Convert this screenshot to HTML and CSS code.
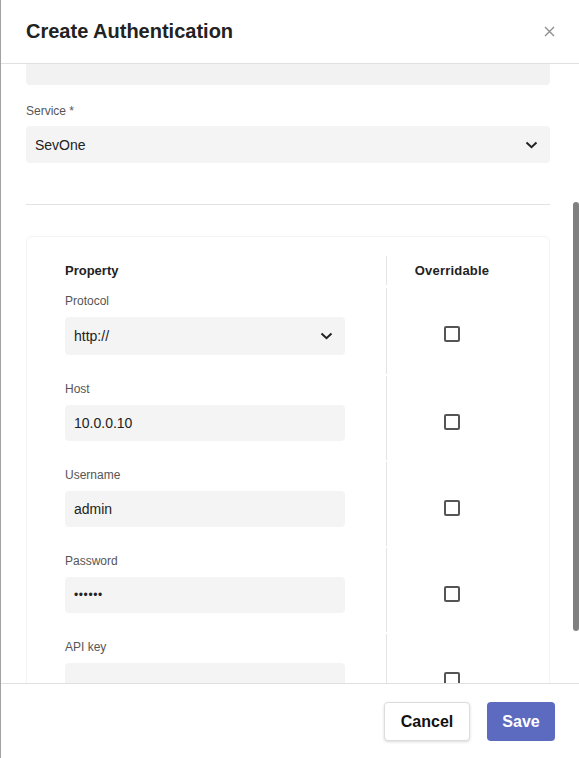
FILE: index.html
```html
<!DOCTYPE html>
<html lang="en">
<head>
<meta charset="utf-8">
<title>Create Authentication</title>
<link rel="stylesheet" href="styles.css">
</head>
<body>
<div class="dialog">
  <header class="dlg-header">
    <h1 class="dlg-title">Create Authentication</h1>
    <button class="close-btn" aria-label="Close">
      <svg width="11" height="11" viewBox="0 0 11 11"><path d="M1 1L10 10M10 1L1 10" stroke="#8c8c8c" stroke-width="1.3" fill="none"/></svg>
    </button>
  </header>
  <main class="dlg-body">
    <div class="cut-input"></div>
    <div class="field-label service-label">Service *</div>
    <div class="select wide">
      <span>SevOne</span>
      <svg class="chev" width="13" height="8" viewBox="0 0 13 8"><path d="M1.5 1.5L6.5 6.2L11.5 1.5" stroke="#222" stroke-width="2" fill="none"/></svg>
    </div>
    <hr class="divider">
    <section class="card">
      <div class="grid">
        <div class="cell-left head">Property</div>
        <div class="cell-right head">Overridable</div>

        <div class="cell-left row">
          <div class="field-label">Protocol</div>
          <div class="select tall">
            <span>http://</span>
            <svg class="chev" width="13" height="8" viewBox="0 0 13 8"><path d="M1.5 1.5L6.5 6.2L11.5 1.5" stroke="#222" stroke-width="2" fill="none"/></svg>
          </div>
        </div>
        <div class="cell-right row"><span class="checkbox"></span></div>

        <div class="cell-left row">
          <div class="field-label">Host</div>
          <div class="input">10.0.0.10</div>
        </div>
        <div class="cell-right row"><span class="checkbox"></span></div>

        <div class="cell-left row">
          <div class="field-label">Username</div>
          <div class="input">admin</div>
        </div>
        <div class="cell-right row"><span class="checkbox"></span></div>

        <div class="cell-left row">
          <div class="field-label">Password</div>
          <div class="input pw">••••••</div>
        </div>
        <div class="cell-right row"><span class="checkbox"></span></div>

        <div class="cell-left row">
          <div class="field-label">API key</div>
          <div class="input"></div>
        </div>
        <div class="cell-right row"><span class="checkbox"></span></div>
      </div>
    </section>
    <div class="scrollbar"></div>
  </main>
  <footer class="dlg-footer">
    <button class="btn btn-cancel">Cancel</button>
    <button class="btn btn-save">Save</button>
  </footer>
</div>
</body>
</html>
```

FILE: styles.css
```css
html, body {
  margin: 0;
  padding: 0;
  width: 579px;
  height: 758px;
  overflow: hidden;
  background: #ffffff;
  font-family: "Liberation Sans", Arial, sans-serif;
  color: #222;
}

.dialog {
  box-sizing: border-box;
  height: 758px;
  display: flex;
  flex-direction: column;
  border-left: 1px solid #a2a2a2;
  background: #fff;
}

.dlg-header {
  box-sizing: border-box;
  height: 64px;
  flex: none;
  display: flex;
  align-items: center;
  justify-content: space-between;
  padding: 0 25px 0 25px;
  border-bottom: 1px solid #e0e0e0;
}

.dlg-title {
  margin: 0;
  font-size: 20px;
  font-weight: bold;
  color: #222;
  letter-spacing: 0px;
}

.close-btn {
  border: none;
  background: none;
  padding: 0;
  width: 11px;
  height: 11px;
  display: flex;
  margin-right: -1px;
}

.dlg-body {
  position: relative;
  flex: 1;
  overflow: hidden;
  padding: 0 29px 0 25px;
}

.cut-input {
  height: 21px;
  background: #f2f2f2;
  border-radius: 0 0 4px 4px;
}

.field-label {
  font-size: 12px;
  line-height: 15px;
  color: #555;
}

.service-label {
  margin-top: 19px;
}

.select, .input {
  box-sizing: border-box;
  display: flex;
  align-items: center;
  justify-content: space-between;
  background: #f4f4f4;
  border-radius: 4px;
  font-size: 14px;
  color: #222;
  padding: 0 12px 0 9px;
}

.select.wide {
  margin-top: 7px;
  height: 37px;
}

.select.tall {
  margin-top: 8px;
  height: 38px;
}

.input {
  margin-top: 8px;
  height: 36px;
}

.input.pw {
  font-size: 12px;
  letter-spacing: 0.6px;
}

.chev {
  flex: none;
}

.divider {
  margin: 41px 0 0 0;
  border: none;
  border-top: 1px solid #e2e2e2;
  height: 0;
}

.card {
  margin-top: 31px;
  border: 1px solid #f3f3f3;
  border-radius: 6px;
  padding: 19px 32px 0 32px;
  height: 600px;
}

.grid {
  display: grid;
  grid-template-columns: 328px 1fr;
  row-gap: 2px;
}

.cell-left {
  box-sizing: border-box;
  border-right: 1px solid #e4e4e4;
  padding: 0 41px 0 6px;
}

.cell-right {
  display: flex;
  justify-content: center;
}

.head {
  height: 29px;
  font-size: 13px;
  font-weight: bold;
  color: #222;
  display: flex;
  align-items: center;
  padding-bottom: 1px;
}

.cell-right.head {
  justify-content: center;
  letter-spacing: 0.2px;
}

.cell-left.row {
  padding-top: 6px;
  padding-bottom: 19px;
}

.cell-right.row {
  align-items: flex-start;
  padding-top: 38px;
}

.checkbox {
  box-sizing: border-box;
  display: block;
  width: 16px;
  height: 16px;
  border: 2px solid #555;
  border-radius: 2px;
  margin-left: -1px;
}

.scrollbar {
  position: absolute;
  right: 0;
  top: 138px;
  width: 6px;
  height: 429px;
  background: #808080;
  border-radius: 3px;
}

.dlg-footer {
  box-sizing: border-box;
  flex: none;
  height: 75px;
  border-top: 1px solid #e0e0e0;
  display: flex;
  justify-content: flex-end;
  align-items: flex-start;
  gap: 17px;
  padding: 18px 24px 0 0;
}

.btn {
  box-sizing: border-box;
  height: 39px;
  border-radius: 4px;
  font-family: "Liberation Sans", Arial, sans-serif;
  font-size: 16px;
  font-weight: bold;
  cursor: pointer;
}

.btn-cancel {
  width: 86px;
  background: #fff;
  color: #111;
  border: 1px solid #dcdcdc;
  box-shadow: 0 1px 3px rgba(0, 0, 0, 0.15);
}

.btn-save {
  width: 68px;
  background: #5c6bc0;
  color: #fff;
  border: none;
}
```
